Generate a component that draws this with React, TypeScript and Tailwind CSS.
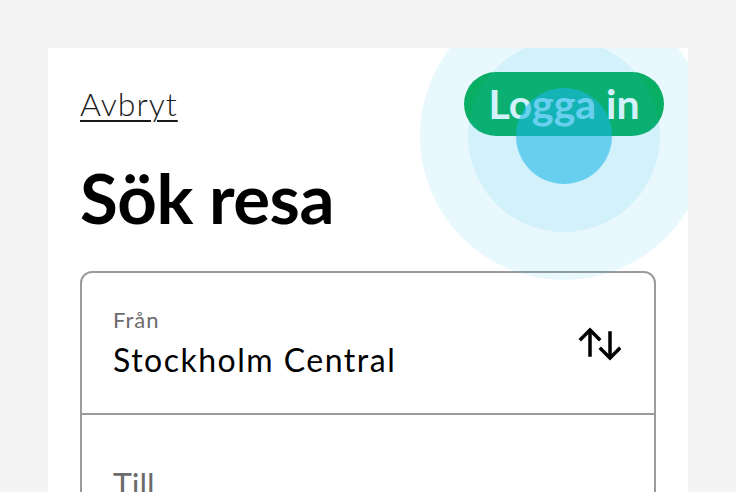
import React from 'react';

function SwapIcon() {
  return (
    <svg width="44" height="36" viewBox="0 0 44 36" fill="none" stroke="#000" strokeWidth="3.5" strokeLinecap="square">
      <path d="M13 6 V30" />
      <path d="M4 14 L13 5 L22 14" strokeLinejoin="miter" />
      <path d="M33 8 V32" />
      <path d="M24 24 L33 33 L42 24" strokeLinejoin="miter" />
    </svg>
  );
}

export default function App() {
  return (
    <div className="min-h-screen bg-[#f4f4f4] px-12 pt-12 font-['Lato',sans-serif]">
      <div className="relative min-h-[444px] overflow-hidden bg-white pt-6 pr-6 pl-8">
        {/* Header */}
        <div className="flex items-center justify-between">
          <a className="text-[32px] leading-none font-light tracking-[1px] text-[#1a1a1a] underline decoration-2 underline-offset-4">
            Avbryt
          </a>
          <button className="flex h-16 w-[200px] items-center justify-center rounded-full bg-[#07ad56] text-[41px] font-bold text-white">
            Logga in
          </button>
        </div>

        <h1 className="mt-[27px] text-[69px] leading-none font-bold tracking-[-0.5px] text-black">Sök resa</h1>

        {/* Search card */}
        <div className="mt-[39px] mr-2 overflow-hidden rounded-xl border-2 border-[#9b9b9b]">
          <div className="flex h-[140px] items-center justify-between pr-[33px] pl-[31px]">
            <div>
              <div className="text-[22px] leading-[26px] tracking-[1px] text-[#6b6b6b]">Från</div>
              <div className="mt-2 text-[32px] leading-[38px] tracking-[1.5px] text-black">Stockholm Central</div>
            </div>
            <SwapIcon />
          </div>
          <div className="h-[2px] bg-[#9b9b9b]" />
          <div className="flex h-[140px] items-center pl-[31px]">
            <div className="text-[32px] leading-[38px] text-[#6b6b6b]">Till</div>
          </div>
        </div>

        {/* Touch ripple */}
        <div className="pointer-events-none absolute top-[-56px] left-[372px] h-[288px] w-[288px] rounded-full bg-[#1cb7e7]/10" />
        <div className="pointer-events-none absolute top-[-8px] left-[420px] h-[192px] w-[192px] rounded-full bg-[#1cb7e7]/10" />
        <div className="pointer-events-none absolute top-[40px] left-[468px] h-[96px] w-[96px] rounded-full bg-[#1cb7e7]/[0.58]" />
      </div>
    </div>
  );
}
